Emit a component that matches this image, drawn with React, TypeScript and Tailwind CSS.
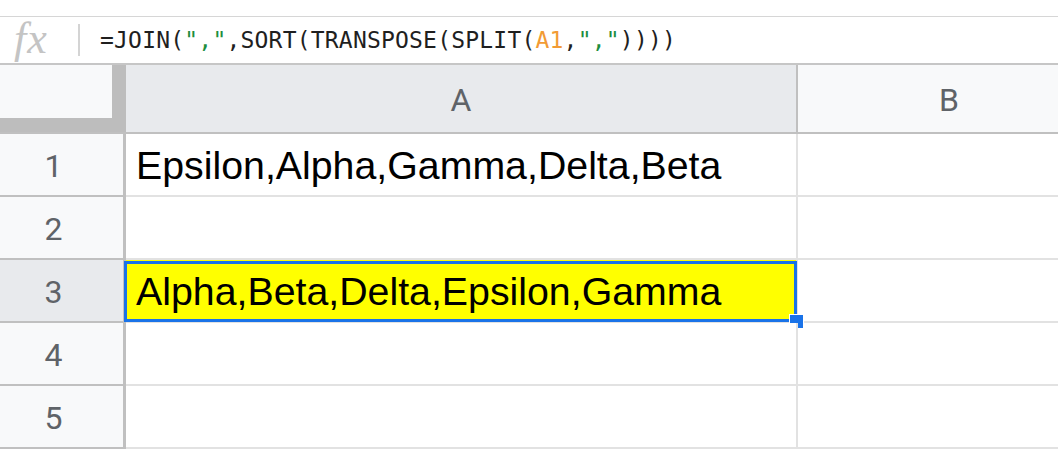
import React from "react";

const rows = [
  { n: 1, a: "Epsilon,Alpha,Gamma,Delta,Beta" },
  { n: 2, a: "" },
  { n: 3, a: "Alpha,Beta,Delta,Epsilon,Gamma", selected: true },
  { n: 4, a: "" },
  { n: 5, a: "" },
];

function FormulaBar() {
  return (
    <div className="h-[48px] flex items-center bg-white border-b-2 border-[#c6c6c6]">
      <div
        className="w-[78px] pl-[14px] pb-[2px] text-[#c4c4c4] text-[44px] italic leading-none tracking-[1px]"
        style={{ fontFamily: '"Liberation Serif", serif' }}
      >
        fx
      </div>
      <div className="w-[2px] h-[32px] bg-[#d4d4d4]" />
      <div
        className="pl-[20px] text-[23px] text-[#1f1f1f] tracking-[0.2px] whitespace-pre"
        style={{ fontFamily: '"DejaVu Sans Mono", monospace' }}
      >
        =JOIN(<span className="text-[#1e8e3e]">","</span>,SORT(TRANSPOSE(SPLIT(
        <span className="text-[#f29b34]">A1</span>,<span className="text-[#1e8e3e]">","</span>))))
      </div>
    </div>
  );
}

function HeaderRow() {
  return (
    <div className="flex h-[69px] border-b-2 border-[#c0c0c0]">
      <div className="w-[126px] shrink-0 bg-[#bdbdbd]">
        <div className="w-[112px] h-[53px] bg-[#f8f9fa]" />
      </div>
      <div className="w-[672px] shrink-0 bg-[#e8eaed] flex items-center justify-center pt-[2px] text-[32px] text-[#5f6368] border-r-2 border-[#c0c0c0]">
        A
      </div>
      <div className="w-[302px] shrink-0 bg-[#f8f9fa] flex items-center justify-center pt-[2px] text-[32px] text-[#5f6368]">
        B
      </div>
    </div>
  );
}

export default function App() {
  return (
    <div
      className="w-[1058px] h-[464px] overflow-hidden bg-white"
      style={{ fontFamily: 'Roboto, "Liberation Sans", sans-serif' }}
    >
      <div className="h-[17px] bg-white border-b border-[#d6d6d6]" />
      <FormulaBar />
      <HeaderRow />
      {rows.map((r) => (
        <div key={r.n} className="flex h-[63px]">
          <div
            className={
              "w-[126px] shrink-0 border-r-[3px] border-b-2 border-[#c0c0c0] flex items-center justify-center pr-[16px] pt-[2px] text-[32px] text-[#5f6368] " +
              (r.selected ? "bg-[#e8eaed]" : "bg-[#f8f9fa]")
            }
          >
            {r.n}
          </div>
          <div
            className={
              "relative w-[672px] shrink-0 border-r-2 border-b-2 border-[#e2e2e2] flex items-center pl-[10px] pt-[2px] text-[39.3px] text-black " +
              (r.selected ? "bg-[#ffff00]" : "bg-white")
            }
            style={{ fontFamily: '"Liberation Sans", Arial, sans-serif' }}
          >
            {r.a}
            {r.selected && (
              <>
                <div className="absolute left-[-2px] top-[1px] right-[-1px] bottom-[-1px] border-[3px] border-[#1a73e8]" />
                <div className="absolute right-[-8px] bottom-[-8px] w-[15px] h-[15px] bg-[#1a73e8] border border-white" />
              </>
            )}
          </div>
          <div className="w-[302px] shrink-0 border-b-2 border-[#e2e2e2] bg-white" />
        </div>
      ))}
    </div>
  );
}
